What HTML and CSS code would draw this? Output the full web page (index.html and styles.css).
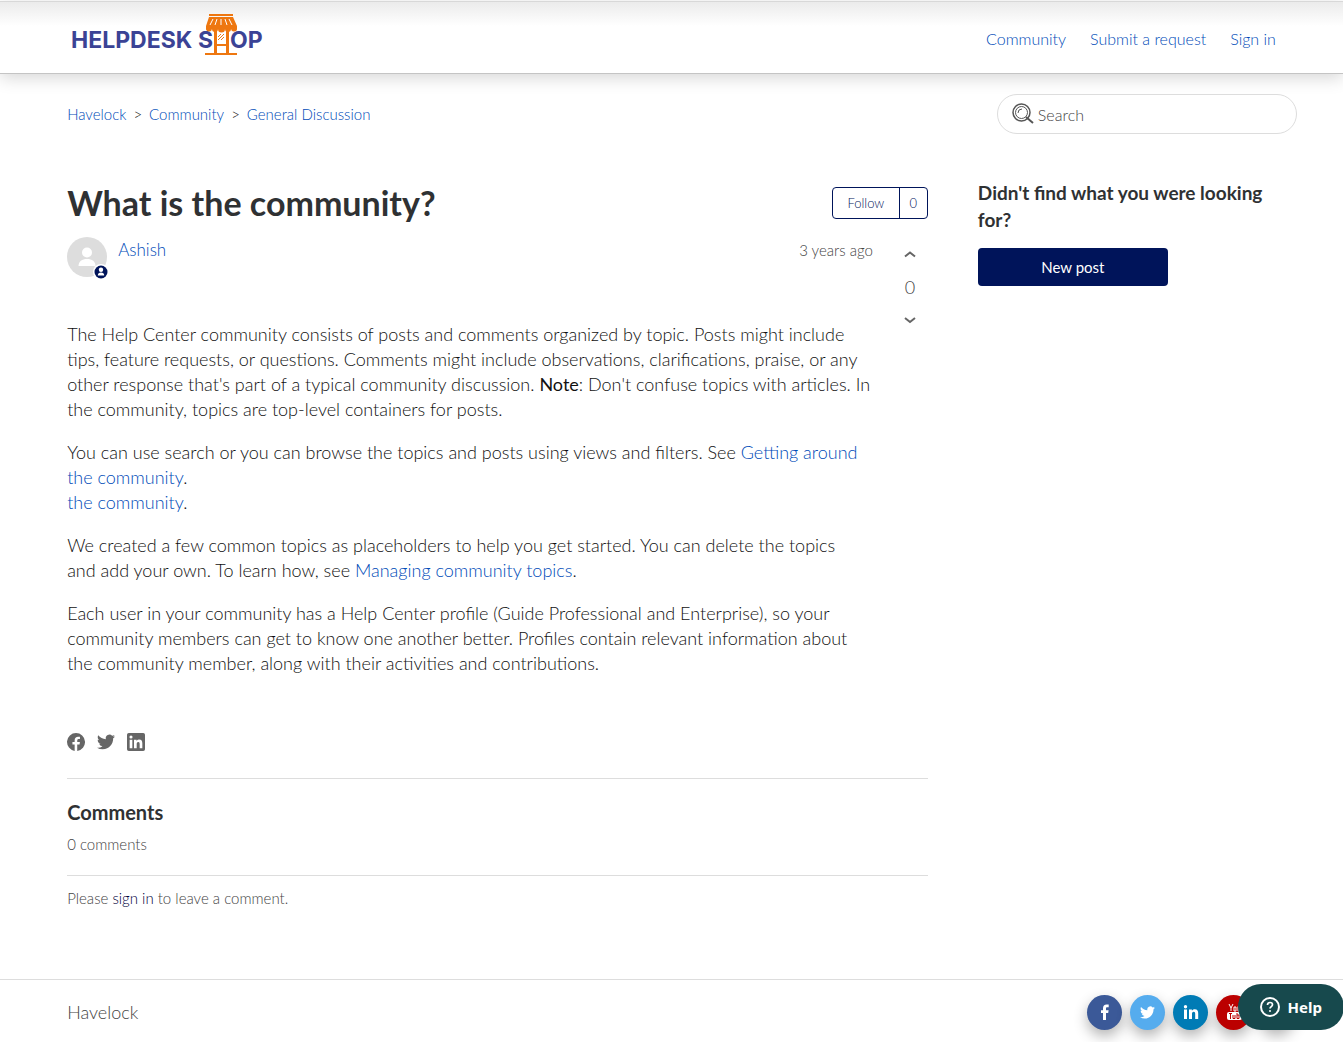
FILE: index.html
```html
<!DOCTYPE html>
<html lang="en">
<head>
  <meta charset="UTF-8" />
  <meta name="viewport" content="width=device-width, initial-scale=1.0"/>
  <title>What is the community? - Havelock</title>
  <link rel="stylesheet" href="styles.css">
</head>
<body>
  <header class="header">
    <a class="logo" href="#" aria-label="Helpdesk Shop">
      <svg width="200" height="46" viewBox="0 0 200 46">
        <g class="logo-text">
          <text x="4" y="37">HELPDESK</text>
          <text x="131" y="37">S</text>
          <text x="163" y="37">OP</text>
        </g>
        <!-- shop front standing in for the H -->
        <path d="M148 18h13v24h-13z" fill="#fff"/>
        <g fill="#ee7710">
          <path d="M142 3h24v2h-24z"/>
          <path d="M142 6h24l4 9v2a3 3 0 0 1-6 1 3 3 0 0 1-6 0 3 3 0 0 1-7 0 3 3 0 0 1-6 0 3 3 0 0 1-6-1v-2z"/>
          <path d="M147 18h3v24h-3zM159 18h3v24h-3z"/>
          <path d="M149 33h11v2h-11zM138 42h32v2h-32z"/>
        </g>
        <path d="M146 8l-3 6M150 8l-2 6M154 8v6M158 8l2 6M162 8l3 6" stroke="#fff" stroke-width="1"/>
        <path d="M151 26l3-3M151 29l6-6M154 29l3-3" stroke="#ee7710" stroke-width="1"/>
      </svg>
    </a>
    <nav class="nav">
      <a href="#">Community</a>
      <a href="#">Submit a request</a>
      <a href="#">Sign in</a>
    </nav>
  </header>

  <main class="container">
    <div class="sub-nav">
      <ol class="breadcrumbs">
        <li><a href="#">Havelock</a></li>
        <li><a href="#">Community</a></li>
        <li><a href="#">General Discussion</a></li>
      </ol>
      <form class="search">
        <svg width="22" height="22" viewBox="0 0 22 22" fill="none" stroke="#555">
          <circle cx="9.500" cy="9.500" r="8.500" stroke-width="1.500"/>
          <circle cx="9.500" cy="9.500" r="6" stroke-width="1"/>
          <path d="M6 10a4 4 0 0 1 4-4" />
          <path d="M14 14l7 6" stroke-width="2"/>
        </svg>
        <input type="search" placeholder="Search" aria-label="Search">
      </form>
    </div>

    <div class="columns">
      <div class="post">
        <div class="post-header">
          <h1>What is the community?</h1>
          <div class="follow">
            <button type="button">Follow</button>
            <span class="follow-count">0</span>
          </div>
        </div>

        <div class="post-main">
          <div class="post-content">
            <div class="post-author">
              <div class="avatar">
                <svg width="40" height="40" viewBox="0 0 40 40">
                  <circle cx="20" cy="20" r="20" fill="#ddd"/>
                  <circle cx="20" cy="15.500" r="5" fill="#fff"/>
                  <path d="M11.500 29c0-4.500 3.500-7 8.500-7s8.500 2.500 8.500 7z" fill="#fff"/>
                </svg>
                <svg class="badge" width="16" height="16" viewBox="0 0 16 16">
                  <circle cx="8" cy="8" r="8" fill="#fff"/>
                  <circle cx="8" cy="8" r="6.500" fill="#00145a"/>
                  <circle cx="8" cy="5.800" r="2.200" fill="#fff"/>
                  <path d="M4.800 11.500c0-2 1.200-3 3.200-3s3.200 1 3.200 3z" fill="#fff"/>
                </svg>
              </div>
              <a class="author" href="#">Ashish</a>
              <span class="date">3 years ago</span>
            </div>

            <div class="post-body">
              <p>The Help Center community consists of posts and comments organized by topic. Posts might include tips, feature requests, or questions. Comments might include observations, clarifications, praise, or any other response that's part of a typical community discussion. <strong>Note</strong>: Don't confuse topics with articles. In the community, topics are top-level containers for posts.</p>
              <p>You can use search or you can browse the topics and posts using views and filters. See <a href="#">Getting around the community</a>.<br><a href="#">the community</a>.</p>
              <p>We created a few common topics as placeholders to help you get started. You can delete the topics<br>and add your own. To learn how, see <a href="#">Managing community topics</a>.</p>
              <p>Each user in your community has a Help Center profile (Guide Professional and Enterprise), so your community members can get to know one another better. Profiles contain relevant information about the community member, along with their activities and contributions.</p>
            </div>
          </div>

          <div class="votes">
            <button type="button" aria-label="Vote up">
              <svg width="12" height="8" viewBox="0 0 12 8"><path d="M1 6.500l5-4 5 4"/></svg>
            </button>
            <span>0</span>
            <button type="button" aria-label="Vote down">
              <svg width="12" height="8" viewBox="0 0 12 8"><path d="M1 2l5 4 5-4"/></svg>
            </button>
          </div>
        </div>

        <div class="share">
          <a href="#" aria-label="Facebook">
            <svg width="18" height="18" viewBox="0 0 12 12"><path d="M6 0a6 6 0 0 1 .813 11.945V7.630h1.552l.244-1.585H6.812v-.867c0-.658.214-1.242.827-1.242h.985V2.550c-.173-.024-.538-.075-1.230-.075-1.444 0-2.290.767-2.290 2.513v1.055H3.618v1.585h1.484v4.304A6.001 6.001 0 0 1 6 0z"/></svg>
          </a>
          <a href="#" aria-label="Twitter">
            <svg width="18" height="18" viewBox="0 0 24 24"><path d="M23.950 4.570a10 10 0 0 1-2.820.775 4.960 4.960 0 0 0 2.160-2.720c-.950.555-2.005.960-3.127 1.184a4.920 4.920 0 0 0-8.384 4.482C7.690 8.090 4.070 6.130 1.640 3.160a4.820 4.820 0 0 0-.666 2.475c0 1.710.870 3.213 2.188 4.096a4.900 4.900 0 0 1-2.228-.616v.060a4.920 4.920 0 0 0 3.946 4.827 5 5 0 0 1-2.212.085 4.940 4.940 0 0 0 4.604 3.417A9.870 9.870 0 0 1 0 19.540a13.990 13.990 0 0 0 7.557 2.209c9.053 0 13.998-7.496 13.998-13.985 0-.210 0-.420-.015-.630A9.940 9.940 0 0 0 24 4.590z"/></svg>
          </a>
          <a href="#" aria-label="LinkedIn">
            <svg width="18" height="18" viewBox="0 0 12 12"><path d="M10.800 0A1.200 1.200 0 0 1 12 1.200v9.600a1.200 1.200 0 0 1-1.200 1.200H1.200A1.200 1.200 0 0 1 0 10.800V1.200A1.200 1.200 0 0 1 1.200 0h9.600zM8.090 4.356a1.870 1.870 0 0 0-1.598.792l-.085.133h-.024v-.783H4.676v5.727h1.778V7.392c0-.747.140-1.470 1.068-1.470.913 0 .925.855.925 1.518v2.785h1.778V7.084l-.005-.325c-.050-1.380-.456-2.403-2.130-2.403zm-4.531.142h-1.780v5.727h1.780V4.498zm-.890-2.846a1.032 1.032 0 1 0 0 2.064 1.032 1.032 0 0 0 0-2.064z"/></svg>
          </a>
        </div>

        <section class="comments">
          <h2>Comments</h2>
          <p class="comment-count">0 comments</p>
          <p class="comment-callout">Please <a href="#">sign in</a> to leave a comment.</p>
        </section>
      </div>

      <aside class="sidebar">
        <h2>Didn't find what you were looking for?</h2>
        <a class="new-post" href="#">New post</a>
      </aside>
    </div>
  </main>

  <footer class="footer">
    <a class="footer-home" href="#">Havelock</a>
    <div class="social">
      <a class="facebook" href="#" aria-label="Facebook">
        <svg width="16" height="16" viewBox="0 0 16 16"><path d="M6 16V9H4V6.200h2V4.400C6 1.700 7.300.500 9.600.500c1 0 1.900.100 2.100.100v2.700h-1.300c-1.100 0-1.400.500-1.400 1.300v1.600h2.600L11.200 9H9v7z"/></svg>
      </a>
      <a class="twitter" href="#" aria-label="Twitter">
        <svg width="15" height="15" viewBox="0 0 24 24"><path d="M23.950 4.570a10 10 0 0 1-2.820.775 4.960 4.960 0 0 0 2.160-2.720c-.950.555-2.005.960-3.127 1.184a4.920 4.920 0 0 0-8.384 4.482C7.690 8.090 4.070 6.130 1.640 3.160a4.820 4.820 0 0 0-.666 2.475c0 1.710.870 3.213 2.188 4.096a4.900 4.900 0 0 1-2.228-.616v.060a4.920 4.920 0 0 0 3.946 4.827 5 5 0 0 1-2.212.085 4.940 4.940 0 0 0 4.604 3.417A9.870 9.870 0 0 1 0 19.540a13.990 13.990 0 0 0 7.557 2.209c9.053 0 13.998-7.496 13.998-13.985 0-.210 0-.420-.015-.630A9.940 9.940 0 0 0 24 4.590z"/></svg>
      </a>
      <a class="linkedin" href="#" aria-label="LinkedIn">
        <svg width="16" height="16" viewBox="0 0 16 16"><path d="M1 5.500h3V15H1zM2.500 1a1.700 1.700 0 1 1 0 3.400 1.700 1.700 0 0 1 0-3.400zM6 5.500h2.900v1.300c.500-.900 1.500-1.500 2.900-1.500 2.700 0 3.400 1.700 3.400 4.200V15h-3v-4.900c0-1.200-.200-2.300-1.500-2.300S9 8.800 9 10v5H6z"/></svg>
      </a>
      <a class="youtube" href="#" aria-label="YouTube">
        <svg width="16" height="18" viewBox="0 0 16 18">
          <path d="M3 1l2 4v3M7 1L5 5M8 4h2v4H8zM12 3.500V8h2V3.500" fill="none" stroke="#fff"/>
          <rect x="1" y="9" width="15" height="8" rx="2"/>
          <path d="M3 10.500h3M4.500 10.500V16M7 12v3.500h2V12M11 10v5.500h2V12h-2" fill="none" stroke="#b00"/>
        </svg>
      </a>
      <a class="instagram" href="#" aria-label="Instagram"></a>
    </div>
  </footer>

  <button class="help" type="button">
    <svg width="20" height="20" viewBox="0 0 20 20" fill="none" stroke="#fff" stroke-width="2">
      <circle cx="10" cy="10" r="9"/>
      <path d="M7.500 8c0-1.500 1-2.500 2.500-2.500s2.500 1 2.500 2.300c0 1.700-2.500 1.900-2.500 3.700" stroke-width="1.700"/>
      <circle cx="10" cy="14" r="1" fill="#fff" stroke="none"/>
    </svg>
    Help
  </button>
</body>
</html>
```

FILE: styles.css
```css
* {
  box-sizing: border-box;
}
body {
  font-family: Lato, "Open Sans", sans-serif;
  font-size: 18px;
  font-weight: 300;
  line-height: 26px;
  color: #111;
  margin: 0;
  padding-top: 1px;
  background: white;
}
a {
  color: #004bb8;
  text-decoration: none;
}
a:hover {
  text-decoration: underline;
}
h1, h2, p, ol {
  margin: 0;
  padding: 0;
}
h1, h2 {
  font-weight: bold;
  color: #2f3133;
}
h2 {
  font-size: 20px;
  line-height: 27px;
}
button {
  font-family: inherit;
  cursor: pointer;
}
svg {
  display: block;
}

/* header */
.header {
  display: flex;
  justify-content: space-between;
  align-items: center;
  height: 73px;
  padding: 0 5%;
  border-top: 1px solid #d8d8d8;
  border-bottom: 1px solid #c4c4c4;
  background: linear-gradient(#ebebeb, #fff 24px);
  box-shadow: 0 4px 16px rgba(0,0,0,0.16);
}
.logo {
  padding-bottom: 8px;
}
.logo-text {
  font-family: Inter, sans-serif;
  font-size: 23px;
  font-weight: bold;
  fill: #3b4395;
}
.nav {
  display: flex;
  gap: 24px;
  padding-top: 2px;
  font-size: 16px;
}

/* breadcrumbs and search */
.container {
  padding: 20px 5% 0;
}
.sub-nav {
  display: flex;
  justify-content: space-between;
  align-items: center;
  margin-right: -21px;
}
.breadcrumbs {
  display: flex;
  list-style: none;
  font-size: 15px;
}
.breadcrumbs li + li::before {
  content: ">";
  margin: 0 7px;
}
.search {
  display: flex;
  align-items: center;
  gap: 4px;
  width: 300px;
  height: 40px;
  padding: 0 14px;
  border: 1px solid #ddd;
  border-radius: 20px;
}
.search input {
  flex: 1;
  min-width: 0;
  border: none;
  outline: none;
  padding: 0;
  background: none;
  font-family: inherit;
  font-size: 16px;
  font-weight: 300;
}
.search input::placeholder {
  color: #444;
}

/* post */
.columns {
  display: flex;
  gap: 50px;
  margin-top: 44px;
}
.post {
  flex: 1;
  min-width: 0;
}
.post-header {
  display: flex;
  justify-content: space-between;
  align-items: center;
  margin-top: 5px;
}
h1 {
  font-size: 34px;
  line-height: 40px;
}
.follow {
  display: flex;
  height: 32px;
  border: 1px solid #00145a;
  border-radius: 4px;
  font-size: 13px;
  line-height: 30px;
  color: #00145a;
}
.follow button {
  width: 67px;
  padding: 0;
  border: none;
  border-right: 1px solid #00145a;
  background: none;
  color: inherit;
  font-size: inherit;
  font-weight: inherit;
}
.follow-count {
  width: 27px;
  text-align: center;
}
.post-main {
  display: flex;
  margin-top: 14px;
}
.post-content {
  flex: 1;
  min-width: 0;
}
.post-author {
  display: flex;
  gap: 11px;
}
.avatar {
  position: relative;
  height: 40px;
}
.badge {
  position: absolute;
  right: -2px;
  bottom: -3px;
}
.author {
  font-size: 17px;
}
.date {
  margin-left: auto;
  font-size: 15px;
  color: #444;
}
.post-body {
  margin-top: 45px;
  line-height: 25px;
}
.post-body p {
  margin-bottom: 18px;
}
.votes {
  display: flex;
  flex-direction: column;
  align-items: center;
  gap: 16px;
  width: 36px;
  margin-left: 19px;
  padding-top: 13px;
  color: #444;
}
.votes button {
  padding: 0;
  border: none;
  background: none;
}
.votes svg {
  fill: none;
  stroke: #666;
  stroke-width: 2;
}
.share {
  display: flex;
  gap: 12px;
  padding: 39px 0 27px;
  border-bottom: 1px solid #ddd;
}
.share svg {
  fill: #666;
}

/* comments */
.comments {
  padding-top: 20px;
  font-size: 15px;
  color: #444;
}
.comment-count {
  padding: 5px 0 18px;
  border-bottom: 1px solid #ddd;
}
.comment-callout {
  padding-top: 9px;
}
.comment-callout a {
  color: #00003c;
}

/* sidebar */
.sidebar {
  width: 298px;
}
.sidebar h2 {
  margin-top: 1px;
  font-size: 19px;
}
.new-post {
  display: block;
  width: 190px;
  margin-top: 15px;
  border-radius: 4px;
  background: #00145a;
  color: white;
  font-size: 15px;
  font-weight: normal;
  line-height: 38px;
  text-align: center;
}

/* footer */
.footer {
  display: flex;
  justify-content: space-between;
  align-items: center;
  height: 63px;
  margin-top: 68px;
  padding: 2px 49px 0 5%;
  border-top: 1px solid #ddd;
}
.footer-home {
  color: #444;
}
.social {
  display: flex;
  gap: 8px;
}
.social a {
  display: flex;
  align-items: center;
  justify-content: center;
  width: 35px;
  height: 35px;
  border-radius: 50%;
  box-shadow: 0 6px 14px rgba(0,0,0,0.3);
}
.social svg {
  fill: white;
}
.facebook {
  background: #3b5998;
}
.twitter {
  background: #55acee;
}
.linkedin {
  background: #007bb5;
}
.youtube {
  background: #bb0000;
}
.instagram {
  background: #125688;
}
.help {
  position: fixed;
  right: -1px;
  bottom: 12px;
  display: flex;
  align-items: center;
  gap: 8px;
  height: 46px;
  padding: 0 22px;
  border: none;
  border-radius: 23px;
  background: #17494d;
  color: white;
  font-family: "Noto Sans", sans-serif;
  font-size: 15px;
  font-weight: bold;
}
```
